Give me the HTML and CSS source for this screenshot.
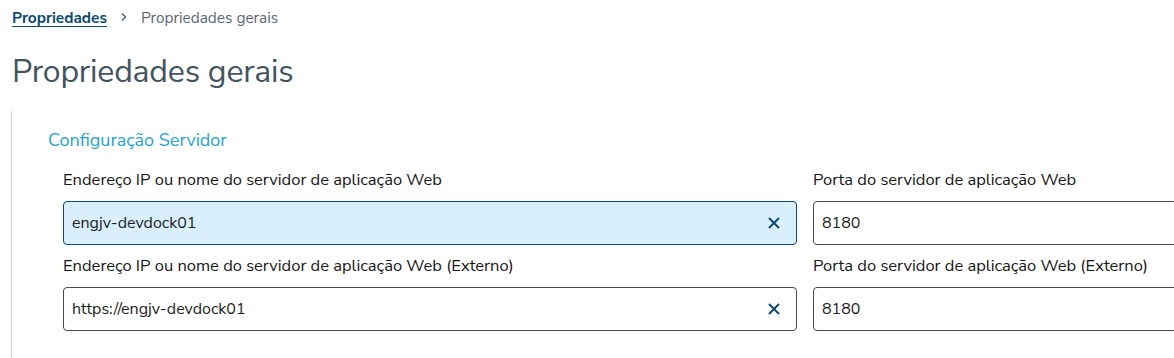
FILE: index.html
```html
<!DOCTYPE html>
<html lang="pt">
<head>
<meta charset="utf-8">
<link rel="stylesheet" href="styles.css">
</head>
<body>
<div class="page">
  <nav class="breadcrumb">
    <a class="crumb-link" href="#">Propriedades</a>
    <span class="crumb-sep"><svg width="10" height="10" viewBox="0 0 10 10"><path d="M3 1.5 L6.5 5 L3 8.5" fill="none" stroke="#3b5f7a" stroke-width="1.4"/></svg></span>
    <span class="crumb-current">Propriedades gerais</span>
  </nav>
  <h1 class="title">Propriedades gerais</h1>
  <section class="panel">
    <h2 class="section-title">Configuração Servidor</h2>
    <div class="grid">
      <div class="field">
        <label class="label">Endereço IP ou nome do servidor de aplicação Web</label>
        <div class="input focused">
          <span class="value">engjv-devdock01</span>
          <svg class="clear" width="14" height="14" viewBox="0 0 14 14"><path d="M2 2 L12 12 M12 2 L2 12" stroke="#0c4a6e" stroke-width="2" fill="none"/></svg>
        </div>
      </div>
      <div class="field">
        <label class="label">Porta do servidor de aplicação Web</label>
        <div class="input plain"><span class="value">8180</span></div>
      </div>
      <div class="field">
        <label class="label">Endereço IP ou nome do servidor de aplicação Web (Externo)</label>
        <div class="input">
          <span class="value">https://engjv-devdock01</span>
          <svg class="clear" width="14" height="14" viewBox="0 0 14 14"><path d="M2 2 L12 12 M12 2 L2 12" stroke="#0c4a6e" stroke-width="2" fill="none"/></svg>
        </div>
      </div>
      <div class="field">
        <label class="label">Porta do servidor de aplicação Web (Externo)</label>
        <div class="input plain"><span class="value">8180</span></div>
      </div>
    </div>
  </section>
</div>
</body>
</html>
```
FILE: styles.css
```css
html, body {
  margin: 0;
  padding: 0;
  background: #ffffff;
  overflow: hidden;
}
body {
  font-family: "Nunito Sans", Lato, "Open Sans", sans-serif;
  width: 1174px;
  height: 358px;
}
.page {
  box-sizing: border-box;
  height: 358px;
  padding: 6px 0 0 11px;
  display: flex;
  flex-direction: column;
  overflow: hidden;
}
.breadcrumb {
  display: flex;
  align-items: center;
  height: 22px;
  font-size: 15.4px;
}
.crumb-link {
  color: #0c4a6e;
  font-weight: 700;
  text-decoration: underline;
  text-underline-offset: 3px;
  padding-left: 1px;
}
.crumb-sep {
  display: flex;
  margin: 0 12px 0 12px;
}
.crumb-current {
  color: #5b6670;
}
.title {
  margin: 0;
  padding-top: 24px;
  font-size: 32px;
  line-height: 40px;
  font-weight: 400;
  color: #43545e;
  padding-left: 1px;
  letter-spacing: -0.2px;
}
.panel {
  flex: 1;
  min-height: 0;
  overflow: hidden;
  margin-top: 19px;
  border-left: 1px solid #d4d4d4;
  padding: 17px 0 0 36px;
}
.section-title {
  margin: 0;
  font-size: 18px;
  line-height: 24px;
  font-weight: 400;
  color: #29a3c9;
}
.grid {
  display: grid;
  grid-template-columns: 734px 734px;
  column-gap: 16px;
  padding-left: 15px;
  margin-top: 7px;
}
.label {
  display: block;
  font-size: 16.5px;
  line-height: 24px;
  padding: 9px 0;
  color: #161616;
  white-space: nowrap;
}
.input {
  box-sizing: border-box;
  height: 44px;
  border: 1px solid #4a4a4a;
  border-radius: 4px;
  display: flex;
  align-items: center;
  justify-content: space-between;
  padding: 0 15px 0 8px;
  font-size: 16px;
  color: #1c1c1c;
}
.input.focused {
  background: #d9f0fc;
  border-color: #0c4a6e;
}
.clear {
  flex: none;
}
```
